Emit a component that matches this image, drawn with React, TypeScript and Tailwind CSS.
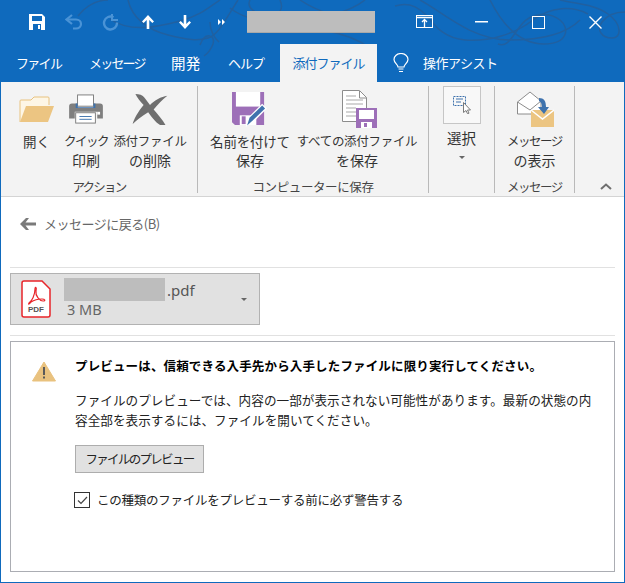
const font = "font-['Noto_Sans_CJK_JP','Noto_Sans',sans-serif]"

function Swirls() {
  return (
    <svg className="absolute inset-0 pointer-events-none" width="625" height="82" viewBox="0 0 625 82" fill="none" stroke="#2160a0" strokeWidth="1.500">
      <path d="M78 16c8-10 18-16 30-16M110 19c20 14 48 8 70 2s30-15 40-21" />
      <path d="M128 0c4 18 20 30 40 35s30 6 40 3 16-16 30-38" />
      <path d="M200 45c5-14 16-10 13-1-3 8-9 12-9 12M210 22c0 8 4 16 9 20" />
      <path d="M250 0c-4 8 6 14 16 15 14 2 18-6 14-15M230 8c10 8 30 16 60 14s60-10 75-22" />
      <path d="M285 30c20-4 60 0 85 18M300 0c15 10 35 18 60 18" />
      <path d="M395 6c12-4 22 0 30 8s16 24 40 26 50-6 68-20 40-14 55-6M420 0c20 10 50 40 90 40s60-10 70-20" />
      <path d="M490 0c12 24 30 44 54 44s26-16 16-24-28-8-38 4-14 24-24 20" />
      <path d="M560 0c16 4 34 4 48 14s14 24 4 24-16-8-10-16 16-10 23-10" />
    </svg>
  )
}

function Save() {
  return (
    <svg width="16" height="16" viewBox="0 0 16 16">
      <path d="M0 0h13l3 3v13H0z" fill="#fff" />
      <rect x="3" y="2" width="10" height="5" fill="#0f6abd" />
      <rect x="4" y="10" width="8" height="6" fill="#0f6abd" />
      <rect x="9" y="11" width="2" height="4" fill="#fff" />
    </svg>
  )
}

function UndoIcon() {
  return (
    <svg width="18" height="16" viewBox="0 0 18 16" fill="none" stroke="#4a93d6" strokeWidth="2.200">
      <path d="M7 1 1.500 5.500 7 10" />
      <path d="M2 5.500h9c3 0 5 2 5 4.500s-2 4.500-5 4.500H8" />
    </svg>
  )
}

function RedoIcon() {
  return (
    <svg width="17" height="17" viewBox="0 0 17 17" fill="none" stroke="#4a93d6" strokeWidth="2.400">
      <path d="M11.500 3.200A6.500 6.500 0 1 0 15 8.500" />
      <path d="M10 0v6h6" strokeWidth="2" />
    </svg>
  )
}

function Arrow({ down = false }: { down?: boolean }) {
  return (
    <svg width="12" height="14" viewBox="0 0 12 14" fill="#fff" className={down ? 'rotate-180' : ''}>
      <path d="M6 0 12 6.500 10.300 8 7.300 5v9H4.700V5L1.700 8 0 6.500z" />
    </svg>
  )
}

function Bulb() {
  return (
    <svg width="16" height="20" viewBox="0 0 16 20" fill="none" stroke="#fff" strokeWidth="1.200">
      <path d="M5 14c0-2.500-4-4-4-7.500a7 6 0 0 1 14 0c0 3.500-4 5-4 7.500z" />
      <path d="M5.500 16h5M6 18.500h4" />
    </svg>
  )
}

function FolderIcon() {
  return (
    <svg width="36" height="27" viewBox="0 0 36 27">
      <path d="M1 26V5q0-1 1-1h10l3-3h14q1 0 1 1v7" fill="#fdf6e6" stroke="#e8c27f" />
      <path d="M1 26 7 10h28l-6 16z" fill="#ecc582" />
    </svg>
  )
}

function PrinterIcon() {
  return (
    <svg width="34" height="30" viewBox="0 0 36 32">
      <rect x="9" y="1" width="17" height="12" fill="#fff" stroke="#7a7a7a" />
      <path d="M3 10h6v5h17v-5h7q3 0 3 3v13h-6v-7H6v7H0V13q0-3 3-3z" fill="#7f7f7f" />
      <path d="M7 15h21v-5h-2v4H9v-4H7z" fill="#3e72ad" />
      <rect x="7" y="20" width="21" height="11" fill="#fff" stroke="#7a7a7a" />
      <path d="M11 24h13M11 27h13" stroke="#3e72ad" />
      <rect x="30" y="19" width="3" height="3" fill="#fff" />
    </svg>
  )
}

function DeleteIcon() {
  return (
    <svg width="36" height="31" viewBox="0 0 38 34" fill="#6f6f6f">
      <path d="M3 0c4 0 8 1 10 4l6 8c5-5 12-9 19-10-5 4-11 10-15 15 4 5 10 11 13 17h-6c-5-3-10-10-13-14C10 24 4 29 0 33c1-5 6-14 12-21C8 8 5 4 3 0z" />
    </svg>
  )
}

function SaveAsIcon() {
  return (
    <svg width="36" height="35" viewBox="0 0 37 36">
      <path d="M0 0h33v34H3l-3-3z" fill="#9d6fb8" />
      <rect x="4" y="0" width="25" height="15" fill="#fff" />
      <rect x="8" y="24" width="17" height="10" fill="#fff" />
      <rect x="10" y="25" width="4" height="8" fill="#9d6fb8" />
      <path d="M14 36l3-10L31 12l5 5-14 14z" fill="#fff" />
      <path d="M15.500 34.500l2.500-8L31 14l3 3-13 12.500z" fill="#3e72ad" />
    </svg>
  )
}

function SaveAllIcon() {
  return (
    <svg width="36" height="38" viewBox="0 0 36 38">
      <path d="M1.500.5h17l7 7v24h-24z" fill="#fff" stroke="#8c8c8c" />
      <path d="M18.500 1v7h7" fill="none" stroke="#8c8c8c" />
      <path d="M5 6h10M5 10h17M5 14h17M5 18h10M5 22h10M5 26h10" stroke="#a9a9a9" />
      <path d="M15 18h21v20H15z" fill="#9d6fb8" />
      <rect x="18" y="20" width="15" height="9" fill="#fff" />
      <rect x="20" y="32" width="11" height="6" fill="#fff" />
      <rect x="23" y="33" width="3" height="4" fill="#9d6fb8" />
    </svg>
  )
}

function SelectIcon() {
  return (
    <svg width="18" height="18" viewBox="0 0 18 18" fill="none">
      <rect x=".5" y=".5" width="12" height="9" stroke="#3e72ad" strokeDasharray="2 1" />
      <path d="M3 3h7M3 6h5" stroke="#3e72ad" />
      <path d="M10.500 6.500v10l2.500-2 1.500 3.200 1.500-.5-1.500-3.200h3z" fill="#fff" stroke="#7a7a7a" />
    </svg>
  )
}

function ShowMessageIcon() {
  return (
    <svg width="37" height="37" viewBox="0 0 37 37" fill="none">
      <path d="M.5 23V11L13 1l11 9v13z" fill="#fff" stroke="#8c8c8c" />
      <path d="M.5 11 13 19l11-9" stroke="#8c8c8c" />
      <path d="M14 36V19h23v17z" fill="#ecc582" />
      <path d="M14 19l11.500 9L37 19" stroke="#fff" strokeWidth="1.500" />
      <path d="M22 7c5 0 7 3 7 9h3l-5 7-6-7h4c0-3-1-5-3-6z" fill="#3e72ad" />
    </svg>
  )
}

function PdfIcon() {
  return (
    <svg width="30" height="38" viewBox="0 0 30 38" fill="none">
      <path d="M3 1h18l8 8v26q0 2-2 2H3q-2 0-2-2V3q0-2 2-2z" fill="#fff" stroke="#e8252a" strokeWidth="1.500" />
      <path d="M8 23c3-2 6-8 6-14 0-3 2-2 1 2-1 5 4 10 7 10s2-2-1-2c-4 0-8 1-11 3-2 2-3 3-2 1z" stroke="#e8252a" strokeWidth="1.200" />
      <text x="15" y="32" textAnchor="middle" fontSize="8" fontWeight="700" fill="#555" fontFamily="Liberation Sans, sans-serif">PDF</text>
    </svg>
  )
}

function WarningIcon() {
  return (
    <svg width="24" height="21" viewBox="0 0 24 21">
      <path d="M12 1 23.500 20H.5z" fill="#e9c27f" stroke="#e9c27f" strokeLinejoin="round" />
      <rect x="11" y="6" width="2" height="8" fill="#5a5a5a" />
      <rect x="11" y="15.500" width="2" height="2" fill="#5a5a5a" />
    </svg>
  )
}

type Line = { t: string; c: string }

const kanji = 'text-[14px] tracking-[0px]'
const mixed = 'text-[13.500px] tracking-[-0.200px]'
const kana = 'text-[12.500px] tracking-[-1.500px]'
const plain = 'text-[12.500px] tracking-[-0.300px]'

function RibbonButton({ icon, lines, width }: { icon: React.ReactNode; lines: Line[]; width: string }) {
  return (
    <div className={`flex flex-col items-center ${width}`}>
      <div className="h-[46px] flex items-center justify-center">{icon}</div>
      {lines.map((l) => (
        <div key={l.t} className={`h-[19px] leading-[18px] text-[#333] whitespace-nowrap ${l.c}`}>{l.t}</div>
      ))}
    </div>
  )
}

function GroupLabel({ children, c }: { children: React.ReactNode; c: string }) {
  return <div className={`h-[17px] -mb-[2px] text-center leading-[17px] text-[#444] whitespace-nowrap ${c}`}>{children}</div>
}

export default function App() {
  return (
    <div className={`w-[625px] h-[583px] overflow-hidden bg-white flex flex-col ${font}`}>
      {/* Title bar + tabs */}
      <div className="relative bg-[#0f6abd] h-[82px] shrink-0">
        <Swirls />
        <div className="relative h-[44px] flex items-center pl-[18px]">
          <div className="w-[37px] flex justify-center"><Save /></div>
          <div className="w-[37px] flex justify-center"><UndoIcon /></div>
          <div className="w-[37px] flex justify-center"><RedoIcon /></div>
          <div className="w-[37px] flex justify-center"><Arrow /></div>
          <div className="w-[37px] flex justify-center"><Arrow down /></div>
          <div className="w-[37px] flex justify-center">
            <svg width="8" height="6" viewBox="0 0 8 6" fill="#fff"><path d="M0 0l3 3-3 3zM4 0l3 3-3 3z" /></svg>
          </div>
          <div className="ml-[7px] w-[128px] h-[22px] bg-[#bdbdbd] border-b border-[#a9a9a9] -mt-[1px]" />
          <div className="ml-[21px] w-[57px] flex justify-center">
            <svg width="17" height="14" viewBox="0 0 17 14" fill="none" stroke="#fff">
              <rect x=".5" y=".5" width="16" height="12" strokeWidth="1" />
              <path d="M0 2.500h17" strokeWidth="1.500" />
              <path d="M8.500 12V5M6 7l2.500-2.500L11 7" strokeWidth="1.300" />
            </svg>
          </div>
          <div className="w-[57px] flex justify-center">
            <svg width="13" height="2" viewBox="0 0 13 2"><rect width="13" height="1.500" fill="#fff" /></svg>
          </div>
          <div className="w-[57px] flex justify-center"><div className="w-[13px] h-[13px] border-[1.500px] border-white" /></div>
          <div className="w-[57px] flex justify-center">
            <svg width="13" height="13" viewBox="0 0 13 13" stroke="#fff" strokeWidth="1.400"><path d="M.5.500l12 12M12.500.500l-12 12" /></svg>
          </div>
        </div>
        <div className="relative h-[38px] flex items-center whitespace-nowrap text-white">
          <div className="ml-[16px] w-[43px] text-[13px] tracking-[-1.700px]">ファイル</div>
          <div className="ml-[30px] w-[56px] text-[13px] tracking-[-1.800px]">メッセージ</div>
          <div className="ml-[26px] w-[30px] text-[14.500px] tracking-[0.200px]">開発</div>
          <div className="ml-[27px] w-[36px] text-[13px] tracking-[-1px]">ヘルプ</div>
          <div className="ml-[16px] w-[97px] h-full bg-[#f3f3f3] flex items-center justify-center text-[13px] text-[#0f6abd] tracking-[-1px]">添付ファイル</div>
          <div className="ml-[16px]"><Bulb /></div>
          <div className="ml-[14px] text-[13px] tracking-[-0.500px]">操作アシスト</div>
        </div>
      </div>

      {/* Window frame */}
      <div className="flex-1 flex flex-col border-l border-r border-b border-[#0f6abd] min-h-0">
        {/* Ribbon */}
        <div className="h-[115px] shrink-0 bg-[#f3f3f3] border-b border-[#d4d4d4] flex pt-[4px]">
          <div className="w-[197px] h-[107px] border-r border-[#b9b9b9] flex flex-col justify-between">
            <div className="flex pl-[11px]">
              <RibbonButton width="w-[49px]" icon={<FolderIcon />} lines={[{ t: '開く', c: 'text-[13.500px]' }]} />
              <RibbonButton width="w-[50px]" icon={<PrinterIcon />} lines={[{ t: 'クイック', c: 'text-[12.500px] tracking-[-1.500px]' }, { t: '印刷', c: kanji }]} />
              <RibbonButton width="w-[78px]" icon={<DeleteIcon />} lines={[{ t: '添付ファイル', c: plain }, { t: 'の削除', c: kanji }]} />
            </div>
            <GroupLabel c="text-[12.500px] tracking-[-1.800px]">アクション</GroupLabel>
          </div>
          <div className="w-[231px] h-[107px] border-r border-[#b9b9b9] flex flex-col justify-between">
            <div className="flex pl-[5px]">
              <RibbonButton width="w-[94px]" icon={<SaveAsIcon />} lines={[{ t: '名前を付けて', c: mixed }, { t: '保存', c: kanji }]} />
              <RibbonButton width="w-[120px]" icon={<div className="ml-[3px]"><SaveAllIcon /></div>} lines={[{ t: 'すべての添付ファイル', c: plain }, { t: 'を保存', c: kanji }]} />
            </div>
            <GroupLabel c="text-[12.500px] tracking-[-0.400px]">コンピューターに保存</GroupLabel>
          </div>
          <div className="w-[66px] h-[107px] border-r border-[#b9b9b9] flex flex-col items-center">
            <div className="w-[38px] h-[38px] bg-[#f8f8f8] border border-[#c6c6c6] flex items-center justify-center">
              <SelectIcon />
            </div>
            <div className="mt-[4px] text-[14.500px] leading-[19px] text-[#333]">選択</div>
            <div className="mt-[9px] w-0 h-0 border-x-[3.500px] border-x-transparent border-t-[3.500px] border-t-[#666]" />
          </div>
          <div className="w-[80px] h-[107px] border-r border-[#b9b9b9] flex flex-col justify-between">
            <RibbonButton width="w-full" icon={<div className="ml-[2px]"><ShowMessageIcon /></div>} lines={[{ t: 'メッセージ', c: kana }, { t: 'の表示', c: kanji }]} />
            <GroupLabel c={kana}>メッセージ</GroupLabel>
          </div>
          <div className="flex-1 h-[107px] flex items-end justify-center pb-[3px] pl-[12px]">
            <svg width="12" height="7" viewBox="0 0 12 7" fill="none" stroke="#6f6f6f" strokeWidth="2"><path d="M1 6l5-4.500L11 6" /></svg>
          </div>
        </div>

        {/* Body */}
        <div className="flex-1 flex flex-col px-[9px] min-h-0">
          <div className="h-[71px] shrink-0 border-b border-[#e1e1e1] flex items-start pt-[17px] pl-[10px]">
            <svg width="16" height="12" viewBox="0 0 16 12" fill="#7a7a7a" className="mt-[4px]"><path d="M6 0h3L5.500 4.500H16v3H5.500L9 12H6L0 6z" /></svg>
            <span className="ml-[8px] text-[13px] leading-[20px] text-[#666] tracking-[-0.500px] whitespace-nowrap">メッセージに戻る(B)</span>
          </div>

          <div className="mt-[5px] w-[250px] h-[52px] shrink-0 bg-[#e1e1e1] border border-[#b2b2b2] flex items-center">
            <div className="ml-[10px] -mt-[1px]"><PdfIcon /></div>
            <div className="ml-[13px] flex flex-col flex-1 -mt-[2px]">
              <div className="flex items-center h-[23px]">
                <div className="w-[101px] h-[23px] bg-[#bdbdbd]" />
                <span className="ml-[2px] text-[15px] leading-[20px] text-[#555] font-['Noto_Sans',sans-serif]">.pdf</span>
              </div>
              <div className="ml-[3px] text-[14.500px] leading-[17px] text-[#666] font-['Noto_Sans',sans-serif]">3 MB</div>
            </div>
            <div className="mr-[12px] w-0 h-0 border-x-[3.500px] border-x-transparent border-t-[3.500px] border-t-[#666]" />
          </div>

          <div className="mt-[10px] h-px shrink-0 bg-[#e1e1e1]" />

          <div className="mt-[5px] h-[231px] shrink-0 border border-[#abadb3] flex pl-[21px] pt-[15px]">
            <div className="shrink-0 w-[24px] mt-[4px]"><WarningIcon /></div>
            <div className="ml-[19px] flex flex-col items-start text-[#222]">
              <div className="text-[12.500px] leading-[17px] font-bold text-black tracking-[0.150px] whitespace-nowrap">プレビューは、信頼できる入手先から入手したファイルに限り実行してください。</div>
              <div className="mt-[16px] w-[525px] text-[12.600px] leading-[20px] tracking-[0.050px]">ファイルのプレビューでは、内容の一部が表示されない可能性があります。最新の状態の内容全部を表示するには、ファイルを開いてください。</div>
              <div className="mt-[15px] w-[129px] h-[28px] bg-[#e1e1e1] border border-[#adadad] flex items-center justify-center text-[12.500px] tracking-[-1.700px] whitespace-nowrap">ファイルのプレビュー</div>
              <div className="mt-[18px] -ml-[1px] flex items-center">
                <div className="w-[16px] h-[16px] border border-[#333] flex items-center justify-center">
                  <svg width="11" height="9" viewBox="0 0 11 9" fill="none" stroke="#444" strokeWidth="1.200"><path d="M1 4.500l3 3L10 1" /></svg>
                </div>
                <span className="ml-[7px] text-[12.500px] leading-[18px] tracking-[-0.250px] whitespace-nowrap">この種類のファイルをプレビューする前に必ず警告する</span>
              </div>
            </div>
          </div>
        </div>
      </div>
    </div>
  )
}
